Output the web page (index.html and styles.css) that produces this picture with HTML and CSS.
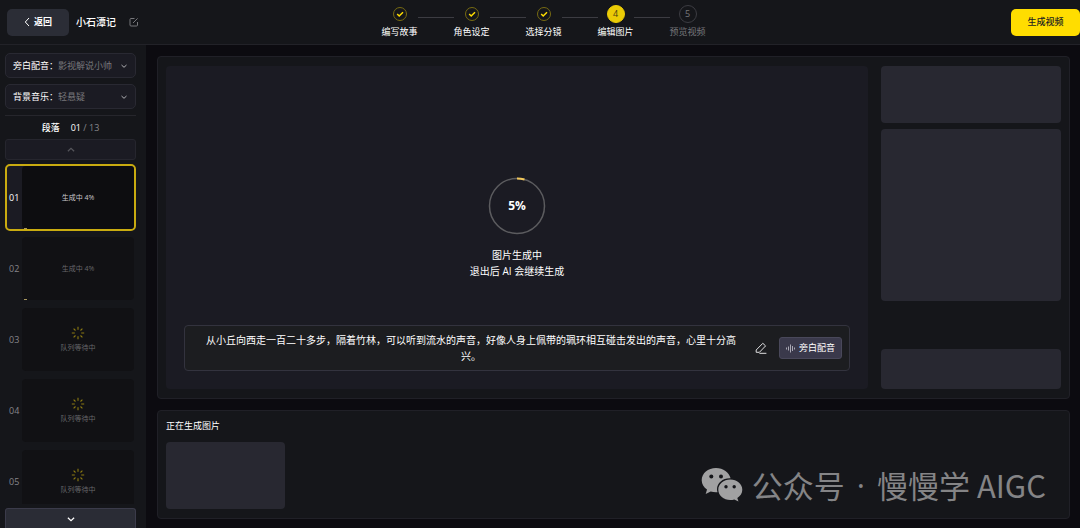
FILE: index.html
```html
<!DOCTYPE html>
<html lang="zh-CN">
  <head>
    <meta charset="utf-8">
    <title>小石潭记</title>
    <link rel="stylesheet" href="styles.css">
  </head>
  <body>
  <svg class="defs" aria-hidden="true">
    <symbol id="check" viewBox="0 0 14 14">
      <circle cx="7" cy="7" r="6.5" fill="none" stroke="#776a13"/>
      <path d="M4.2 7l2 2 3.8-3.7" fill="none" stroke="#ffdd00" stroke-width="1.5"/>
    </symbol>
    <symbol id="down" viewBox="0 0 8 8">
      <path d="M1.5 3L4 5.3 6.5 3" fill="none" stroke="currentColor"/>
    </symbol>
    <symbol id="spinner" viewBox="0 0 14 14">
      <path d="M7 .8v3M7 10.2v3M.8 7h3M10.2 7h3M2.6 2.6l1.9 1.9M9.5 9.5l1.9 1.9M2.6 11.4l1.9-1.9M9.5 4.5l1.9-1.9" fill="none" stroke="currentColor" stroke-width="1.1"/>
    </symbol>
  </svg>

  <header class="header">
    <div class="header-left">
      <button class="back" type="button">
        <svg width="6" height="10" viewBox="0 0 6 10"><path d="M5 1L1.3 5 5 9" fill="none" stroke="#fff"/></svg>
        返回
      </button>
      <h1 class="title">小石潭记</h1>
      <button class="icon-btn rename" type="button" aria-label="重命名">
        <svg width="10" height="10" viewBox="0 0 10 10"><path d="M5.500 1.500H2a1 1 0 0 0-1 1V8a1 1 0 0 0 1 1h5.500a1 1 0 0 0 1-1V5M4 6l4.600-4.600" fill="none" stroke="currentColor"/></svg>
      </button>
    </div>
    <ol class="steps">
      <li class="step"><span class="mark"><svg width="14" height="14"><use href="#check"/></svg></span>编写故事</li>
      <li class="line"></li>
      <li class="step"><span class="mark"><svg width="14" height="14"><use href="#check"/></svg></span>角色设定</li>
      <li class="line"></li>
      <li class="step"><span class="mark"><svg width="14" height="14"><use href="#check"/></svg></span>选择分镜</li>
      <li class="line"></li>
      <li class="step"><span class="mark num current">4</span>编辑图片</li>
      <li class="line"></li>
      <li class="step next"><span class="mark num">5</span>预览视频</li>
    </ol>
    <button class="generate" type="button">生成视频</button>
  </header>

  <div class="layout">
    <aside class="sidebar">
      <div class="field">
        <label for="voice">旁白配音：</label>
        <select id="voice"><option>影视解说小帅</option></select>
        <svg class="arrow" width="8" height="8"><use href="#down"/></svg>
      </div>
      <div class="field">
        <label for="music">背景音乐：</label>
        <select id="music"><option>轻悬疑</option></select>
        <svg class="arrow" width="8" height="8"><use href="#down"/></svg>
      </div>
      <div class="count"><b>段落</b><span><em>01</em> / 13</span></div>
      <button class="scroll up" type="button" aria-label="上一段"><svg width="10" height="10"><use href="#down"/></svg></button>
      <ul class="scenes">
        <li class="scene active"><span class="no">01</span><div class="thumb">生成中 4%<i class="bar"></i></div></li>
        <li class="scene"><span class="no">02</span><div class="thumb">生成中 4%<i class="bar"></i></div></li>
        <li class="scene"><span class="no">03</span><div class="thumb"><svg class="spin" width="14" height="14"><use href="#spinner"/></svg>队列等待中</div></li>
        <li class="scene"><span class="no">04</span><div class="thumb"><svg class="spin" width="14" height="14"><use href="#spinner"/></svg>队列等待中</div></li>
        <li class="scene"><span class="no">05</span><div class="thumb"><svg class="spin" width="14" height="14"><use href="#spinner"/></svg>队列等待中</div></li>
      </ul>
      <button class="scroll down" type="button" aria-label="下一段"><svg width="10" height="10"><use href="#down"/></svg></button>
    </aside>

    <main class="main">
      <section class="panel editor">
        <div class="stage">
          <div class="progress">
            <div class="ring">
              <svg width="58" height="58" viewBox="0 0 58 58">
                <circle cx="29" cy="29" r="27.500" fill="none" stroke="#5c5c5f" stroke-width="1.500"/>
                <path d="M29 1.500a27.500 27.500 0 0 1 7.500 1" fill="none" stroke="#f3c85a" stroke-width="2"/>
              </svg>
              <strong>5%</strong>
            </div>
            <p>图片生成中<br>退出后 AI 会继续生成</p>
          </div>
          <div class="narration">
            <p>从小丘向西走一百二十多步，隔着竹林，可以听到流水的声音，好像人身上佩带的珮环相互碰击发出的声音，心里十分高兴。</p>
            <button class="icon-btn" type="button" aria-label="编辑">
              <svg width="12" height="12" viewBox="0 0 12 12"><path d="M1.200 8L7.800 1.300l2.800 2.600-6.200 6.400H1.200zM4.400 11.300h7" fill="none" stroke="#e0e0e2"/></svg>
            </button>
            <button class="dub" type="button">
              <svg width="9" height="9" viewBox="0 0 9 9"><path d="M.5 3.500v2M2.500 2.500v4M4.500.5v8M6.500 2v5M8.500 3.500v2" stroke="#aaa9b5"/></svg>
              旁白配音
            </button>
          </div>
        </div>
        <div class="tools">
          <div class="block prompt"></div>
          <div class="block options"></div>
          <div class="block action"></div>
        </div>
      </section>
      <section class="panel gallery">
        <h2>正在生成图片</h2>
        <div class="block picture"></div>
      </section>
    </main>
  </div>

  <div class="watermark">
    <svg width="42" height="36" viewBox="0 0 42 36">
      <path d="M15 1C7 1 .7 6.400.7 13.200c0 3.900 2.100 7.200 5.300 9.400L4.700 27l5-2.500c1.700.5 3.500.8 5.300.8h1.500c-.3-1-.5-2-.5-3 0-6.200 5.700-11 12.700-11h.9C28.200 5.300 22.200 1 15 1z" fill="#a1a1a2"/>
      <path d="M29.300 12.600c-6.700 0-12 4.500-12 10.200s5.300 10.200 12 10.200c1.400 0 2.700-.2 4-.6l4.200 2.200-1.200-3.600c3.100-1.900 5-4.800 5-8.200 0-5.700-5.300-10.200-12-10.200z" fill="#a1a1a2"/>
      <g fill="#15161a"><circle cx="10.300" cy="9.500" r="2"/><circle cx="20" cy="9.500" r="2"/><circle cx="25" cy="19.700" r="1.700"/><circle cx="33.200" cy="19.700" r="1.700"/></g>
    </svg>
    <span>公众号</span><span class="dot">·</span><span>慢慢学 AIGC</span>
  </div>
  </body>
</html>
```
FILE: styles.css
```css
* {
  box-sizing: border-box;
}
body {
  margin: 0;
  height: 100vh;
  display: flex;
  flex-direction: column;
  overflow: hidden;
  background: #0c0b10;
  color: #fff;
  font: 9px/12px "Open Sans", "Noto Sans CJK SC", sans-serif;
}
h1, h2, p, ul, ol {
  margin: 0;
  padding: 0;
  list-style: none;
}
button, select {
  font: inherit;
  color: inherit;
  padding: 0;
  border: none;
  background: none;
}
svg {
  display: block;
  flex: none;
}
.defs {
  position: absolute;
  width: 0;
  height: 0;
}

/* header */
.header {
  display: grid;
  grid-template-columns: 1fr auto 1fr;
  flex: none;
  height: 45px;
  padding-left: 7px;
  background: #15161a;
  border-bottom: 1px solid #222228;
}
.header-left {
  display: flex;
  align-items: center;
}
.back {
  display: flex;
  align-items: center;
  justify-content: center;
  gap: 4px;
  width: 62px;
  height: 27px;
  background: #2b2d36;
  border-radius: 5px;
  font-weight: bold;
}
.title {
  margin-left: 7px;
  font-size: 10px;
  font-weight: 500;
}
.icon-btn {
  color: #77777b;
}
.rename {
  margin-left: 13px;
}
.steps {
  display: flex;
}
.step {
  width: 36px;
  padding-top: 5px;
  text-align: center;
  white-space: nowrap;
}
.mark {
  display: flex;
  align-items: center;
  justify-content: center;
  height: 18px;
  margin-bottom: 3px;
}
.num {
  width: 18px;
  margin-left: auto;
  margin-right: auto;
  border: 1px solid #3c3c42;
  border-radius: 50%;
}
.current {
  background: #ebcc06;
  border-color: #ebcc06;
  color: #4a4312;
}
.next {
  color: #77777b;
}
.line {
  width: 36px;
  height: 1px;
  margin-top: 17px;
  background: #3c3c42;
}
.generate {
  justify-self: end;
  align-self: center;
  width: 69px;
  height: 27px;
  background: #ffdd00;
  border-radius: 5px;
  color: #222;
  font-weight: 500;
}

.layout {
  display: flex;
  flex: 1;
  min-height: 0;
}

/* sidebar */
.sidebar {
  display: flex;
  flex-direction: column;
  flex: none;
  width: 146px;
  padding: 8px 10px 0 5px;
  background: #15161a;
}
.field {
  display: flex;
  align-items: center;
  flex: none;
  height: 25px;
  margin-bottom: 6px;
  padding: 0 7px;
  background: #1b1b23;
  border: 1px solid #292932;
  border-radius: 5px;
}
.field select {
  flex: 1;
  min-width: 0;
  appearance: none;
  color: #77777b;
}
.arrow {
  color: #b0b0b4;
}
.count {
  display: flex;
  align-items: center;
  justify-content: center;
  gap: 11px;
  flex: none;
  height: 24px;
  border-top: 1px solid #26262c;
  color: #88888c;
}
.count b, .count em {
  color: #fff;
  font-style: normal;
  font-weight: 500;
}
.scroll {
  display: flex;
  align-items: center;
  justify-content: center;
  flex: none;
  height: 21px;
  border: 1px solid #26262e;
  border-radius: 3px;
}
.up {
  background: #1b1b23;
  color: #55555b;
}
.up svg {
  transform: rotate(180deg);
}
.down {
  height: 20px;
  background: #2a2c35;
  border-color: #3b3b4a;
  border-bottom: none;
  border-radius: 3px 3px 0 0;
}
.scenes {
  flex: 1;
  min-height: 0;
  margin: 4px 0;
  overflow: hidden;
}
.scene {
  display: flex;
  align-items: center;
  height: 67px;
  margin-bottom: 4px;
  border: 2px solid transparent;
  border-radius: 5px;
  color: #66666a;
}
.no {
  width: 15px;
  padding-left: 2px;
  color: #85858a;
}
.thumb {
  position: relative;
  display: flex;
  flex-direction: column;
  align-items: center;
  justify-content: center;
  gap: 2px;
  flex: 1;
  height: 63px;
  background: #111114;
  border-radius: 4px;
  font-size: 7px;
}
.active {
  background: #1b1b23;
  border-color: #c9ab10;
  color: #c8c8ca;
}
.active .no {
  color: #fff;
}
.active .thumb {
  background: #0d0d10;
}
/* generation progress along the bottom edge */
.bar {
  position: absolute;
  left: 2px;
  bottom: 0;
  width: 3px;
  height: 1px;
  background: #a8975e;
}
.spin {
  color: #8d7b12;
}

/* main */
.main {
  display: flex;
  flex-direction: column;
  gap: 11px;
  flex: 1;
  min-width: 0;
  padding: 11px 10px 9px 11px;
}
.panel {
  padding: 9px 8px;
  background: #15161a;
  border: 1px solid #202027;
  border-radius: 4px;
}
.editor {
  display: flex;
  gap: 13px;
  flex: 1;
  min-height: 0;
}
.stage {
  display: grid;
  flex: 1;
  min-width: 0;
  padding: 18px;
  background: #1b1b23;
  border-radius: 4px;
}
.progress, .narration {
  grid-area: 1 / 1;
}
.progress {
  align-self: center;
  text-align: center;
  font-size: 10px;
  line-height: 16px;
}
.ring {
  display: grid;
  place-items: center;
  margin-bottom: 12px;
}
.ring svg, .ring strong {
  grid-area: 1 / 1;
}
.ring strong {
  font-size: 12px;
}
.narration {
  display: flex;
  align-items: center;
  align-self: end;
  padding: 6px 7px 6px 12px;
  background: #1c1d20;
  border: 1px solid #33333e;
  border-radius: 4px;
}
.narration p {
  flex: 1;
  margin-right: 10px;
  text-align: center;
  font-size: 10px;
  line-height: 16px;
}
.dub {
  display: flex;
  align-items: center;
  justify-content: center;
  gap: 4px;
  width: 63px;
  height: 22px;
  margin-left: 12px;
  background: #3a394b;
  border: 1px solid #49485a;
  border-radius: 3px;
  white-space: nowrap;
}
.tools {
  display: flex;
  flex-direction: column;
  gap: 6px;
  flex: none;
  width: 180px;
}
.block {
  background: #282831;
  border-radius: 4px;
}
.prompt {
  height: 57px;
}
.options {
  height: 172px;
}
.action {
  height: 40px;
  margin-top: auto;
}
.gallery h2 {
  margin-bottom: 10px;
  font-size: 9px;
  font-weight: 400;
}
.picture {
  width: 119px;
  height: 67px;
}

.watermark {
  position: absolute;
  right: 34px;
  bottom: 20px;
  display: flex;
  align-items: center;
  gap: 9px;
  color: #848486;
  font: 31px/46px "Noto Sans CJK SC", sans-serif;
}
.dot {
  margin: 0 3px;
  font-family: "Open Sans", sans-serif;
}
```
